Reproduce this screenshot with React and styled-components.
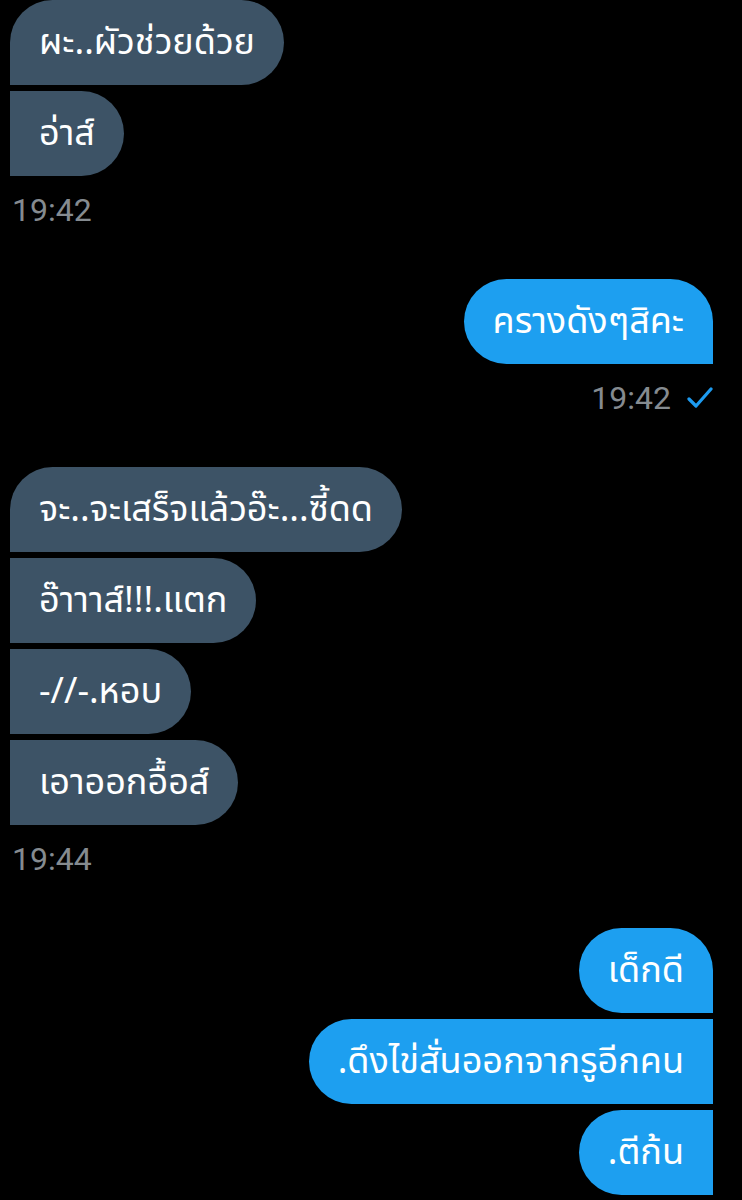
import React from 'react';
import styled, { createGlobalStyle } from 'styled-components';

const GlobalStyle = createGlobalStyle`
    html, body {
        margin: 0;
        padding: 0;
        background: #000;
    }
    body {
        font-family: "Noto Sans Thai", "Noto Sans", Roboto, sans-serif;
    }
`

const groups = [
    {
        mine: false,
        messages: ['ผะ..ผัวช่วยด้วย', 'อ่าส์'],
        time: '19:42',
    },
    {
        mine: true,
        messages: ['ครางดังๆสิคะ'],
        time: '19:42',
    },
    {
        mine: false,
        messages: ['จะ..จะเสร็จแล้วอ๊ะ...ซี้ดด', 'อ๊าาาส์!!!.แตก', '-//-.หอบ', 'เอาออกอื้อส์'],
        time: '19:44',
    },
    {
        mine: true,
        messages: ['เด็กดี', '.ดึงไข่สั่นออกจากรูอีกคน', '.ตีก้น'],
    },
]

// first bubble of a group keeps the outer top corner round,
// the side facing the sender stays square
function radius(mine, i) {
    const r = '43px';
    if (mine) {
        return `${r} ${i === 0 ? r : '0'} 0 ${r}`;
    }
    return `${i === 0 ? r : '0'} ${r} ${r} 0`;
}

export default function App() {
    return (
        <Page>
            <GlobalStyle />
            {groups.map((g, gi) => (
                <Group key={gi} $mine={g.mine}>
                    {g.messages.map((m, i) => (
                        <Bubble key={i} $mine={g.mine} $radius={radius(g.mine, i)}>
                            {m}
                        </Bubble>
                    ))}
                    {g.time && (
                        <Meta>
                            {g.time}
                            {g.mine && (
                                <svg width="26" height="22" viewBox="0 0 26 22">
                                    <path d="M2 12 L9 19 L24 2" fill="none" stroke="#1d9bf0" strokeWidth="3.2" strokeLinecap="round" strokeLinejoin="round" />
                                </svg>
                            )}
                        </Meta>
                    )}
                </Group>
            ))}
        </Page>
    )
}

const Page = styled.div`
    display: flex;
    flex-direction: column;
    padding: 0 29px 0 10px;
    height: 1200px;
    overflow: hidden;
`

const Group = styled.div`
    display: flex;
    flex-direction: column;
    align-items: ${p => p.$mine ? 'flex-end' : 'flex-start'};
    gap: 6px;
    margin-bottom: 49px;
`

const Bubble = styled.div`
    height: 85px;
    flex-shrink: 0;
    box-sizing: border-box;
    display: flex;
    align-items: center;
    padding: 0 29px;
    border-radius: ${p => p.$radius};
    background: ${p => p.$mine ? '#1d9ff0' : '#3d5366'};
    color: #fff;
    font-size: 36px;
    white-space: nowrap;
`

const Meta = styled.div`
    display: flex;
    align-items: center;
    gap: 16px;
    margin-top: 8px;
    padding-left: 2px;
    height: 40px;
    font-family: Roboto, "Noto Sans", sans-serif;
    font-size: 32px;
    color: #858b90;
`
